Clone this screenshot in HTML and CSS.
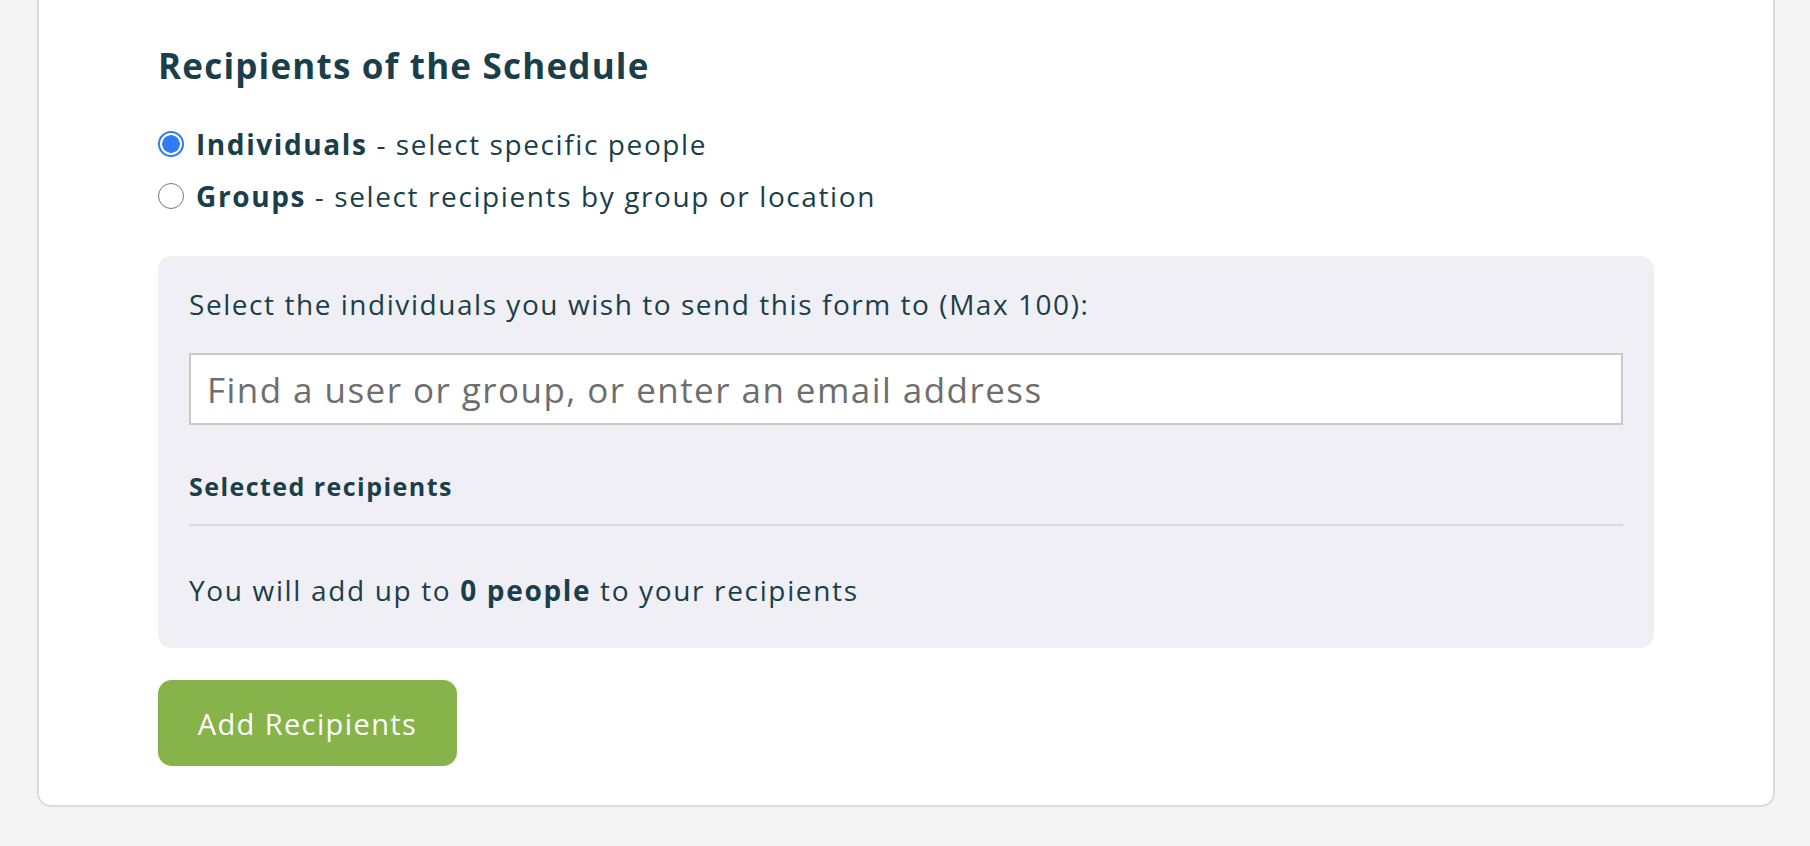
FILE: index.html
```html
<!DOCTYPE html>
<html lang="en">
<head>
<meta charset="utf-8">
<title>Recipients of the Schedule</title>
<link rel="stylesheet" href="styles.css">
</head>
<body>
<div class="page">
  <section class="card">
    <h2 class="title">Recipients of the Schedule</h2>
    <div class="options">
      <label class="option">
        <input type="radio" name="rtype" checked>
        <span class="radio on"></span>
        <span><b>Individuals</b> - select specific people</span>
      </label>
      <label class="option">
        <input type="radio" name="rtype">
        <span class="radio"></span>
        <span><b>Groups</b> - select recipients by group or location</span>
      </label>
    </div>
    <div class="panel">
      <p class="panel-label">Select the individuals you wish to send this form to (Max 100):</p>
      <input class="search" type="text" placeholder="Find a user or group, or enter an email address">
      <h3 class="sel-title">Selected recipients</h3>
      <div class="divider"></div>
      <p class="summary">You will add up to <b>0 people</b> to your recipients</p>
    </div>
    <button class="btn" type="button">Add Recipients</button>
  </section>
</div>
</body>
</html>
```
FILE: styles.css
```css
* { box-sizing: border-box; }
html, body { margin: 0; padding: 0; }
body {
  background: #f4f4f4;
  font-family: "Open Sans", "Noto Sans", sans-serif;
  color: #1a3f4a;
  height: 846px;
  overflow: hidden;
}
.page {
  padding: 0 35px 0 37px;
}
.card {
  background: #fff;
  border: 2px solid #dcdcdc;
  border-top: none;
  border-radius: 0 0 14px 14px;
  padding: 45px 119px 39px 119px;
}
.title {
  margin: 0;
  font-size: 35px;
  line-height: 42px;
  font-weight: 700;
  letter-spacing: 1.2px;
}
.options {
  margin-top: 31px;
  display: flex;
  flex-direction: column;
}
.option {
  display: flex;
  align-items: center;
  height: 52px;
  font-size: 28px;
  letter-spacing: 1.6px;
  cursor: pointer;
}
.option input { display: none; }
.option b { font-weight: 700; }
.radio {
  width: 26px;
  height: 26px;
  border-radius: 50%;
  border: 1.5px solid #767676;
  margin-right: 12px;
  flex: none;
  background: #fff;
}
.radio.on {
  border: 2px solid #2f7cf6;
  background: radial-gradient(circle, #2f7cf6 0 8.5px, #fff 9px);
}
.panel {
  margin-top: 34px;
  background: #f0eff5;
  border-radius: 14px;
  padding: 29px 31px 38px 31px;
}
.panel-label {
  margin: 0;
  font-size: 28px;
  line-height: 39px;
  letter-spacing: 1.55px;
}
.search {
  display: block;
  width: 100%;
  height: 72px;
  margin-top: 29px;
  border: 2px solid #c9c9c9;
  background: #fff;
  padding: 0 16px;
  font-family: inherit;
  font-size: 35px;
  letter-spacing: 1.45px;
  color: #333;
  outline: none;
}
.search::placeholder { color: #6e6e6e; }
.sel-title {
  margin: 44px 0 0 0;
  font-size: 25px;
  line-height: 34px;
  font-weight: 700;
  letter-spacing: 1.45px;
}
.divider {
  height: 2px;
  background: #d9dbdf;
  margin-top: 21px;
}
.summary {
  margin: 45px 0 0 0;
  font-size: 28px;
  line-height: 39px;
  letter-spacing: 1.65px;
}
.btn {
  margin-top: 32px;
  display: block;
  height: 86px;
  width: 299px;
  border: none;
  border-radius: 14px;
  background: #86b44a;
  color: #fff;
  font-family: inherit;
  font-size: 29px;
  letter-spacing: 1.4px;
  cursor: pointer;
}
```
